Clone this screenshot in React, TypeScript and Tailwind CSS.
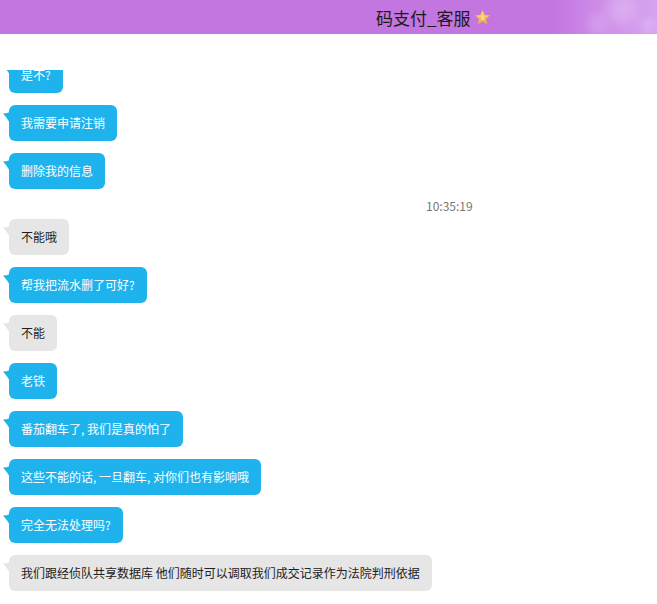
import React from "react";

type Msg = { text: string; kind: "me" | "them" };

const Tail = ({ color }: { color: string }) => (
  <svg
    className="absolute left-[-6px] top-[7px]"
    width="7"
    height="11"
    viewBox="0 0 7 11"
  >
    <path d="M0 1.5 Q3 1.5 7 0 L7 11 Q4 6 0 1.5 Z" fill={color} />
  </svg>
);

const Bubble = ({ m, className = "" }: { m: Msg; className?: string }) => {
  const blue = m.kind === "me";
  return (
    <div className={"relative self-start " + className}>
      <Tail color={blue ? "#1fb3ee" : "#e6e6e6"} />
      <div
        className={
          "h-[36px] flex items-center px-3 rounded-[6px] text-[12px] leading-none whitespace-nowrap " +
          (blue ? "bg-[#1fb3ee] text-white" : "bg-[#e6e6e6] text-[#222]")
        }
      >
        {m.text}
      </div>
    </div>
  );
};

const Star = () => (
  <svg width="17" height="17" viewBox="0 0 24 24" className="ml-[3px]">
    <defs>
      <linearGradient id="sg" x1="0" y1="0" x2="0" y2="1">
        <stop offset="0" stopColor="#ffe27a" />
        <stop offset="1" stopColor="#f2a93b" />
      </linearGradient>
    </defs>
    <path
      d="M12 2 L14.9 8.6 L22 9.2 L16.6 13.9 L18.2 21 L12 17.3 L5.8 21 L7.4 13.9 L2 9.2 L9.1 8.6 Z"
      fill="url(#sg)"
      stroke="#f0b24a"
      strokeWidth="0.6"
      strokeLinejoin="round"
    />
    <path d="M10.5 11 Q12 9.5 13.5 11 L11 14.5 L14 14.5" fill="none" stroke="#fff7d6" strokeWidth="1.1" />
  </svg>
);

export default function App() {
  const msgs1: Msg[] = [
    { text: "我需要申请注销", kind: "me" },
    { text: "删除我的信息", kind: "me" },
  ];
  const msgs2: Msg[] = [
    { text: "不能哦", kind: "them" },
    { text: "帮我把流水删了可好?", kind: "me" },
    { text: "不能", kind: "them" },
    { text: "老铁", kind: "me" },
    { text: "番茄翻车了, 我们是真的怕了", kind: "me" },
    { text: "这些不能的话, 一旦翻车, 对你们也有影响哦", kind: "me" },
    { text: "完全无法处理吗?", kind: "me" },
    { text: "我们跟经侦队共享数据库 他们随时可以调取我们成交记录作为法院判刑依据", kind: "them" },
  ];
  return (
    <div
      className="w-[657px] h-[604px] bg-white overflow-hidden flex flex-col"
      style={{ fontFamily: '"Noto Sans CJK SC", "Noto Sans", sans-serif' }}
    >
      <div className="relative h-[34px] shrink-0 bg-[linear-gradient(90deg,#c375e0_0%,#c375e0_84%,#cf8fe9_92%,#d6a3f1_100%)] flex items-center overflow-hidden">
        <div className="absolute right-[20px] top-[-6px] w-[30px] h-[30px] rounded-full bg-white/20 blur-[6px]" />
        <div className="absolute right-[50px] top-[14px] w-[20px] h-[20px] rounded-full bg-white/15 blur-[5px]" />
        <div className="absolute right-[2px] top-[18px] w-[14px] h-[14px] rounded-full bg-white/20 blur-[4px]" />
        <div className="pl-[376px] flex items-center text-[17px] text-[#1b1b1b] leading-none">
          <span>码支付_客服</span>
          <Star />
        </div>
      </div>
      <div className="h-[36px] shrink-0 bg-white" />
      <div className="flex-1 overflow-hidden pl-[9px] flex flex-col">
        <Bubble m={{ text: "是不?", kind: "me" }} className="mt-[-13px]" />
        {msgs1.map((m, i) => (
          <Bubble key={i} m={m} className="mt-[12px]" />
        ))}
        <div className="mt-[8px] h-[18px] flex items-center pl-[417px] text-[12px] text-[#777] leading-none">
          10:35:19
        </div>
        {msgs2.map((m, i) => (
          <Bubble key={i} m={m} className={i === 0 ? "mt-[4px]" : "mt-[12px]"} />
        ))}
      </div>
    </div>
  );
}
